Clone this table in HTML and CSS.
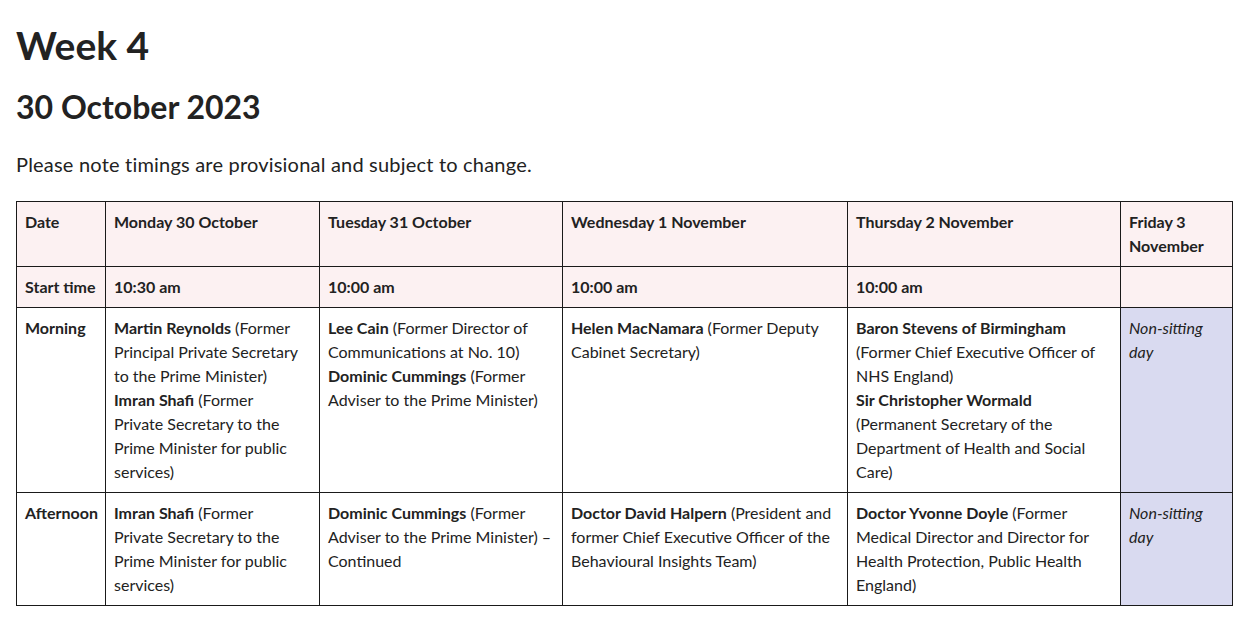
FILE: index.html
```html
<!DOCTYPE html>
<html lang="en">
<head>
<meta charset="utf-8">
<title>Week 4</title>
<link rel="stylesheet" href="styles.css">
</head>
<body>
<main class="page">
  <h1 class="title">Week 4</h1>
  <h2 class="subtitle">30 October 2023</h2>
  <p class="note">Please note timings are provisional and subject to change.</p>
  <table class="schedule">
    <colgroup>
      <col class="c1"><col class="c2"><col class="c3"><col class="c4"><col class="c5"><col class="c6">
    </colgroup>
    <thead>
      <tr class="head">
        <th>Date</th>
        <th>Monday 30 October</th>
        <th>Tuesday 31 October</th>
        <th>Wednesday 1 November</th>
        <th>Thursday 2 November</th>
        <th>Friday 3 November</th>
      </tr>
    </thead>
    <tbody>
      <tr class="head">
        <th>Start time</th>
        <th>10:30 am</th>
        <th>10:00 am</th>
        <th>10:00 am</th>
        <th>10:00 am</th>
        <th></th>
      </tr>
      <tr>
        <th class="rowhead">Morning</th>
        <td><b>Martin Reynolds</b> (Former Principal Private Secretary to the Prime Minister)<br><b>Imran Shafi</b> (Former<br>Private Secretary to the Prime Minister for public services)</td>
        <td><b>Lee Cain</b> (Former Director of Communications at No. 10)<br><b>Dominic Cummings</b> (Former Adviser to the Prime Minister)</td>
        <td><b>Helen MacNamara</b> (Former Deputy Cabinet Secretary)</td>
        <td><b>Baron Stevens of Birmingham</b> (Former Chief Executive Officer of NHS England)<br><b>Sir Christopher Wormald</b> (Permanent Secretary of the Department of Health and Social Care)</td>
        <td class="off"><i>Non-sitting day</i></td>
      </tr>
      <tr>
        <th class="rowhead">Afternoon</th>
        <td><b>Imran Shafi</b> (Former<br>Private Secretary to the Prime Minister for public services)</td>
        <td><b>Dominic Cummings</b> (Former Adviser to the Prime Minister) – Continued</td>
        <td><b>Doctor David Halpern</b> (President and former Chief Executive Officer of the Behavioural Insights Team)</td>
        <td><b>Doctor Yvonne Doyle</b> (Former Medical Director and Director for Health Protection, Public Health England)</td>
        <td class="off"><i>Non-sitting day</i></td>
      </tr>
    </tbody>
  </table>
</main>
</body>
</html>
```

FILE: styles.css
```css
html, body {
  margin: 0;
  padding: 0;
  background: #ffffff;
}
body {
  font-family: Lato, "Noto Sans", sans-serif;
  color: #222222;
}
.page {
  padding: 0 16px;
}
.title {
  font-size: 39px;
  font-weight: 700;
  line-height: 44px;
  margin: 23px 0 0 0;
}
.subtitle {
  font-size: 32px;
  font-weight: 700;
  line-height: 36px;
  margin: 22px 0 0 0;
}
.note {
  font-size: 20px;
  letter-spacing: 0.2px;
  line-height: 28px;
  margin: 25px 0 0 0;
}
.schedule {
  margin-top: 23px;
  border-collapse: collapse;
  table-layout: fixed;
  width: 1216px;
  font-size: 16px;
  line-height: 24px;
}
.c1 { width: 89px; }
.c2 { width: 214px; }
.c3 { width: 243px; }
.c4 { width: 285px; }
.c5 { width: 273px; }
.c6 { width: 112px; }
.schedule th,
.schedule td {
  border: 1px solid #1a1a1a;
  padding: 8px 8px;
  text-align: left;
  vertical-align: top;
}
.schedule th {
  font-weight: 700;
}
.head th {
  background: #fcf1f2;
}
.schedule td {
  font-weight: 400;
}
.schedule b {
  font-weight: 700;
}
.off {
  background: #d9daf0;
}
```
